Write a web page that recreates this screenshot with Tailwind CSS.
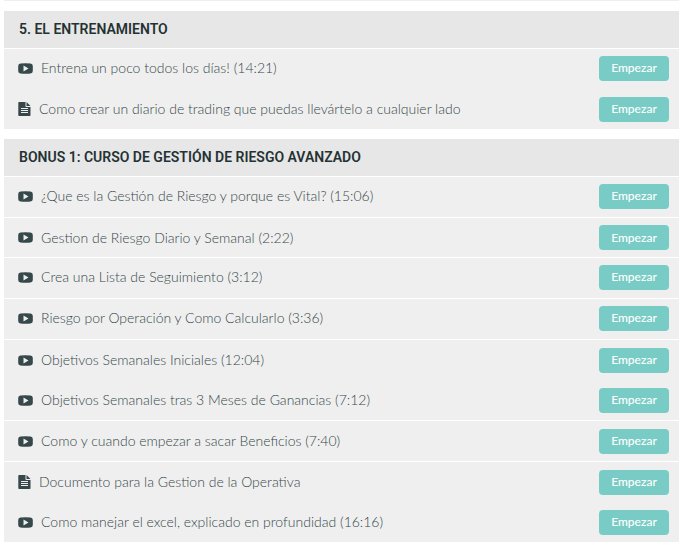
<!doctype html>
<html lang="es">

<head>
  <meta charset="utf-8">
  <meta name="viewport" content="width=device-width, initial-scale=1">
  <title>Contenido del curso</title>
  <script src="https://cdn.jsdelivr.net/npm/@tailwindcss/browser@4"></script>
</head>

<body class="bg-white pl-1 pr-[3px] font-['Lato',sans-serif] text-[#36484a]">

<!-- icons shared by all the lessons -->
<svg class="hidden" aria-hidden="true">
  <symbol id="video" viewBox="0 0 15 11">
    <path fill-rule="evenodd" d="M2.500 0.400Q7.500 0 12.500 0.400Q14.800 0.600 14.800 3V8Q14.800 10.400 12.500 10.600Q7.500 11 2.500 10.600Q0.200 10.400 0.200 8V3Q0.200 0.600 2.500 0.400ZM5.500 2.500V8.500L10.500 5.500Z" />
  </symbol>
  <symbol id="text" viewBox="0 0 13 14">
    <path fill-rule="evenodd" d="M0.300 .8Q0.300 0 1.100 0H7.500V4.200Q7.500 5 8.300 5H12.500V13.200Q12.500 14 11.700 14H1.100Q0.300 14 0.300 13.200ZM3 6V7H10V6ZM3 8V9H10V8ZM3 10V11H10V10Z" />
    <path d="M8.500 0L12.500 4H8.500Z" />
  </symbol>
</svg>

<div class="h-px bg-[#efefef]"></div>

<main class="mt-2.5 space-y-2.5">
  <section>
    <h2 class="flex h-[37px] items-center bg-[#e7e7e7] pb-0.5 pl-[15px] font-['Roboto',sans-serif] text-sm font-semibold text-[#253234]">5. EL ENTRENAMIENTO</h2>
    <ul class="mt-px bg-[#efefef] text-sm font-light">
      <li class="flex h-10 items-center justify-between pb-0.5 pl-3.5 pr-2.5">
        <a href="#" class="flex items-center gap-2"><svg class="h-[11px] w-[15px] fill-current"><use href="#video" /></svg>Entrena un poco todos los días! (14:21)</a>
        <button class="h-[25px] w-[70px] rounded bg-[#78ccc5] text-xs font-medium text-white">Empezar</button>
      </li>
      <li class="flex h-10 items-center justify-between pl-3.5 pr-2.5">
        <a href="#" class="flex items-center gap-2"><svg class="h-3.5 w-[13px] fill-current"><use href="#text" /></svg>Como crear un diario de trading que puedas llevártelo a cualquier lado</a>
        <button class="h-[25px] w-[70px] rounded bg-[#78ccc5] text-xs font-medium text-white">Empezar</button>
      </li>
    </ul>
  </section>

  <section>
    <h2 class="flex h-[37px] items-center bg-[#e7e7e7] pb-0.5 pl-[15px] font-['Roboto',sans-serif] text-sm font-semibold text-[#253234]">BONUS 1: CURSO DE GESTIÓN DE RIESGO AVANZADO</h2>
    <ul class="mt-px bg-[#efefef] text-sm font-light">
      <li class="flex h-[41px] items-center justify-between border-b border-white pb-0.5 pl-3.5 pr-2.5">
        <a href="#" class="flex items-center gap-2"><svg class="h-[11px] w-[15px] fill-current"><use href="#video" /></svg>¿Que es la Gestión de Riesgo y porque es Vital? (15:06)</a>
        <button class="h-[25px] w-[70px] rounded bg-[#78ccc5] text-xs font-medium text-white">Empezar</button>
      </li>
      <li class="flex h-10 items-center justify-between border-b border-white pl-3.5 pr-2.5">
        <a href="#" class="flex items-center gap-2"><svg class="h-[11px] w-[15px] fill-current"><use href="#video" /></svg>Gestion de Riesgo Diario y Semanal (2:22)</a>
        <button class="h-[25px] w-[70px] rounded bg-[#78ccc5] text-xs font-medium text-white">Empezar</button>
      </li>
      <li class="flex h-[41px] items-center justify-between border-b border-white pb-0.5 pl-3.5 pr-2.5">
        <a href="#" class="flex items-center gap-2"><svg class="h-[11px] w-[15px] fill-current"><use href="#video" /></svg>Crea una Lista de Seguimiento (3:12)</a>
        <button class="h-[25px] w-[70px] rounded bg-[#78ccc5] text-xs font-medium text-white">Empezar</button>
      </li>
      <li class="flex h-[41px] items-center justify-between border-b border-white pb-0.5 pl-3.5 pr-2.5">
        <a href="#" class="flex items-center gap-2"><svg class="h-[11px] w-[15px] fill-current"><use href="#video" /></svg>Riesgo por Operación y Como Calcularlo (3:36)</a>
        <button class="h-[25px] w-[70px] rounded bg-[#78ccc5] text-xs font-medium text-white">Empezar</button>
      </li>
      <li class="flex h-10 items-center justify-between pl-3.5 pr-2.5">
        <a href="#" class="flex items-center gap-2"><svg class="h-[11px] w-[15px] fill-current"><use href="#video" /></svg>Objetivos Semanales Iniciales (12:04)</a>
        <button class="h-[25px] w-[70px] rounded bg-[#78ccc5] text-xs font-medium text-white">Empezar</button>
      </li>
      <li class="flex h-[41px] items-center justify-between border-b border-white pl-3.5 pr-2.5">
        <a href="#" class="flex items-center gap-2"><svg class="h-[11px] w-[15px] fill-current"><use href="#video" /></svg>Objetivos Semanales tras 3 Meses de Ganancias (7:12)</a>
        <button class="h-[25px] w-[70px] rounded bg-[#78ccc5] text-xs font-medium text-white">Empezar</button>
      </li>
      <li class="flex h-[41px] items-center justify-between border-b border-white pl-3.5 pr-2.5">
        <a href="#" class="flex items-center gap-2"><svg class="h-[11px] w-[15px] fill-current"><use href="#video" /></svg>Como y cuando empezar a sacar Beneficios (7:40)</a>
        <button class="h-[25px] w-[70px] rounded bg-[#78ccc5] text-xs font-medium text-white">Empezar</button>
      </li>
      <li class="flex h-10 items-center justify-between pl-3.5 pr-2.5">
        <a href="#" class="flex items-center gap-2"><svg class="h-3.5 w-[13px] fill-current"><use href="#text" /></svg>Documento para la Gestion de la Operativa</a>
        <button class="h-[25px] w-[70px] rounded bg-[#78ccc5] text-xs font-medium text-white">Empezar</button>
      </li>
      <li class="flex h-10 items-center justify-between pl-3.5 pr-2.5">
        <a href="#" class="flex items-center gap-2"><svg class="h-[11px] w-[15px] fill-current"><use href="#video" /></svg>Como manejar el excel, explicado en profundidad (16:16)</a>
        <button class="h-[25px] w-[70px] rounded bg-[#78ccc5] text-xs font-medium text-white">Empezar</button>
      </li>
    </ul>
  </section>
</main>
</body>

</html>
